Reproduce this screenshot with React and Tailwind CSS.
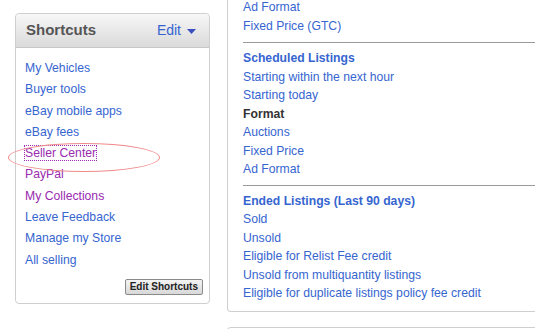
import React from 'react';

const shortcuts = [
  { label: 'My Vehicles' },
  { label: 'Buyer tools' },
  { label: 'eBay mobile apps' },
  { label: 'eBay fees' },
  { label: 'Seller Center', visited: true, focus: true },
  { label: 'PayPal', visited: true },
  { label: 'My Collections', visited: true },
  { label: 'Leave Feedback' },
  { label: 'Manage my Store' },
  { label: 'All selling' },
];

function Shortcuts() {
  return (
    <div className="relative mt-[13px] ml-[15px] w-[195px] h-[291px] shrink-0 rounded-[4px] border border-[#cfcfcf] bg-white flex flex-col">
      {/* header */}
      <div className="h-[34px] flex items-center justify-between pl-[10px] pr-[13px] rounded-t-[4px] border-b border-[#c8c8c8] bg-gradient-to-b from-[#f7f7f7] to-[#dadada]">
        <span className="text-[15px] font-bold text-[#555]">Shortcuts</span>
        <span className="flex items-center gap-[6px] text-[14px] text-[#3665d0]">
          Edit
          <svg width="9" height="5" viewBox="0 0 9 5" className="mt-[1px]">
            <path d="M0 0h9L4.5 5z" fill="#3a4fc0" />
          </svg>
        </span>
      </div>

      {/* links */}
      <ul className="pt-[10px] pl-[9px] flex flex-col">
        {shortcuts.map((s) => (
          <li key={s.label} className="leading-[21.3px] text-[12.2px]">
            <span
              className={
                (s.visited ? 'text-[#9a2ab0]' : 'text-[#3665d0]') +
                (s.focus ? ' outline outline-1 outline-dotted outline-[#9a2ab0]' : '')
              }
            >
              {s.label}
            </span>
          </li>
        ))}
      </ul>

      <div className="mt-auto mb-[8px] mr-[6px] flex justify-end">
        <button className="h-[16px] px-[4px] rounded-[2px] border border-[#8a8a8a] bg-gradient-to-b from-[#f4f4f4] to-[#d8d8d8] text-[10px] font-bold leading-none text-[#222]">
          Edit Shortcuts
        </button>
      </div>

      {/* red annotation ellipse */}
      <div className="absolute left-[-8px] top-[129px] w-[152px] h-[29px] rounded-[50%] border border-[#f08a8a]" />
    </div>
  );
}

function Line({ children, bold, dark }) {
  return (
    <div
      className={
        'leading-[18.5px] text-[12.2px] ' +
        (dark ? 'font-bold text-[#333]' : bold ? 'font-bold text-[#3665d0]' : 'text-[#3665d0]')
      }
    >
      {children}
    </div>
  );
}

function Divider({ first }) {
  return <div className={(first ? 'mt-[7px]' : 'mt-[6px]') + ' mb-[6px] border-t border-[#9a9a9a]'} />;
}

function Listings() {
  return (
    <div className="ml-[17px] flex flex-col gap-[15px] shrink-0 w-[330px]">
      <div className="h-[312px] rounded-b-[4px] border border-t-0 border-[#cfcfcf] pl-[15px] pt-0 flex flex-col">
        <div className="-mt-[2px]">
          <Line>Ad Format</Line>
          <Line>Fixed Price (GTC)</Line>
        </div>
        <Divider first />
        <Line bold>Scheduled Listings</Line>
        <Line>Starting within the next hour</Line>
        <Line>Starting today</Line>
        <Line dark>Format</Line>
        <Line>Auctions</Line>
        <Line>Fixed Price</Line>
        <Line>Ad Format</Line>
        <Divider />
        <Line bold>Ended Listings (Last 90 days)</Line>
        <Line>Sold</Line>
        <Line>Unsold</Line>
        <Line>Eligible for Relist Fee credit</Line>
        <Line>Unsold from multiquantity listings</Line>
        <Line>Eligible for duplicate listings policy fee credit</Line>
      </div>
      <div className="h-[20px] rounded-t-[4px] border border-b-0 border-[#cfcfcf]" />
    </div>
  );
}

export default function App() {
  return (
    <div
      className="w-[535px] h-[329px] overflow-hidden bg-white flex items-start"
      style={{ fontFamily: '"Liberation Sans", Arial, sans-serif' }}
    >
      <Shortcuts />
      <Listings />
    </div>
  );
}
